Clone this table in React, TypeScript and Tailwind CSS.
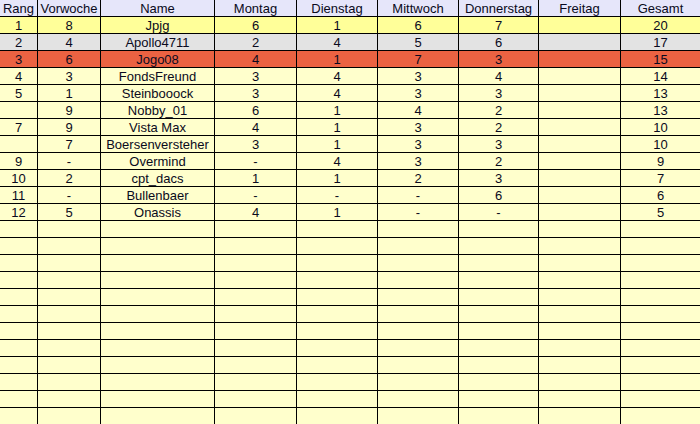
const header = ["Rang", "Vorwoche", "Name", "Montag", "Dienstag", "Mittwoch", "Donnerstag", "Freitag", "Gesamt"];

const rows: string[][] = [
  ["1", "8", "Jpjg", "6", "1", "6", "7", "", "20"],
  ["2", "4", "Apollo4711", "2", "4", "5", "6", "", "17"],
  ["3", "6", "Jogo08", "4", "1", "7", "3", "", "15"],
  ["4", "3", "FondsFreund", "3", "4", "3", "4", "", "14"],
  ["5", "1", "Steinbooock", "3", "4", "3", "3", "", "13"],
  ["", "9", "Nobby_01", "6", "1", "4", "2", "", "13"],
  ["7", "9", "Vista Max", "4", "1", "3", "2", "", "10"],
  ["", "7", "Boersenversteher", "3", "1", "3", "3", "", "10"],
  ["9", "-", "Overmind", "-", "4", "3", "2", "", "9"],
  ["10", "2", "cpt_dacs", "1", "1", "2", "3", "", "7"],
  ["11", "-", "Bullenbaer", "-", "-", "-", "6", "", "6"],
  ["12", "5", "Onassis", "4", "1", "-", "-", "", "5"],
];

const empty = Array.from({ length: 12 }, () => Array(9).fill(""));
const allRows = [...rows, ...empty];

function rowBg(i: number) {
  if (i === 0) return "bg-[#ffff99]";
  if (i === 1) return "bg-[#e3e3e3]";
  if (i === 2) return "bg-[#eb6242]";
  return "bg-[#ffffcc]";
}

export default function App() {
  return (
    <div className="w-[700px] h-[424px] overflow-hidden bg-black font-['Liberation_Sans',Arial,sans-serif] text-[13px] text-[#0a0a20]">
      <div className="grid grid-cols-[37px_62px_113px_81px_80px_80px_79px_81px_79px] auto-rows-[16px] gap-px">
        {header.map((h) => (
          <div key={h} className="bg-[#e6e6fa] flex items-center justify-center leading-none whitespace-nowrap">
            {h}
          </div>
        ))}
        {allRows.map((r, i) =>
          r.map((c, j) => (
            <div key={`${i}-${j}`} className={`${rowBg(i)} flex items-center justify-center leading-none whitespace-nowrap`}>
              {c}
            </div>
          ))
        )}
      </div>
    </div>
  );
}
